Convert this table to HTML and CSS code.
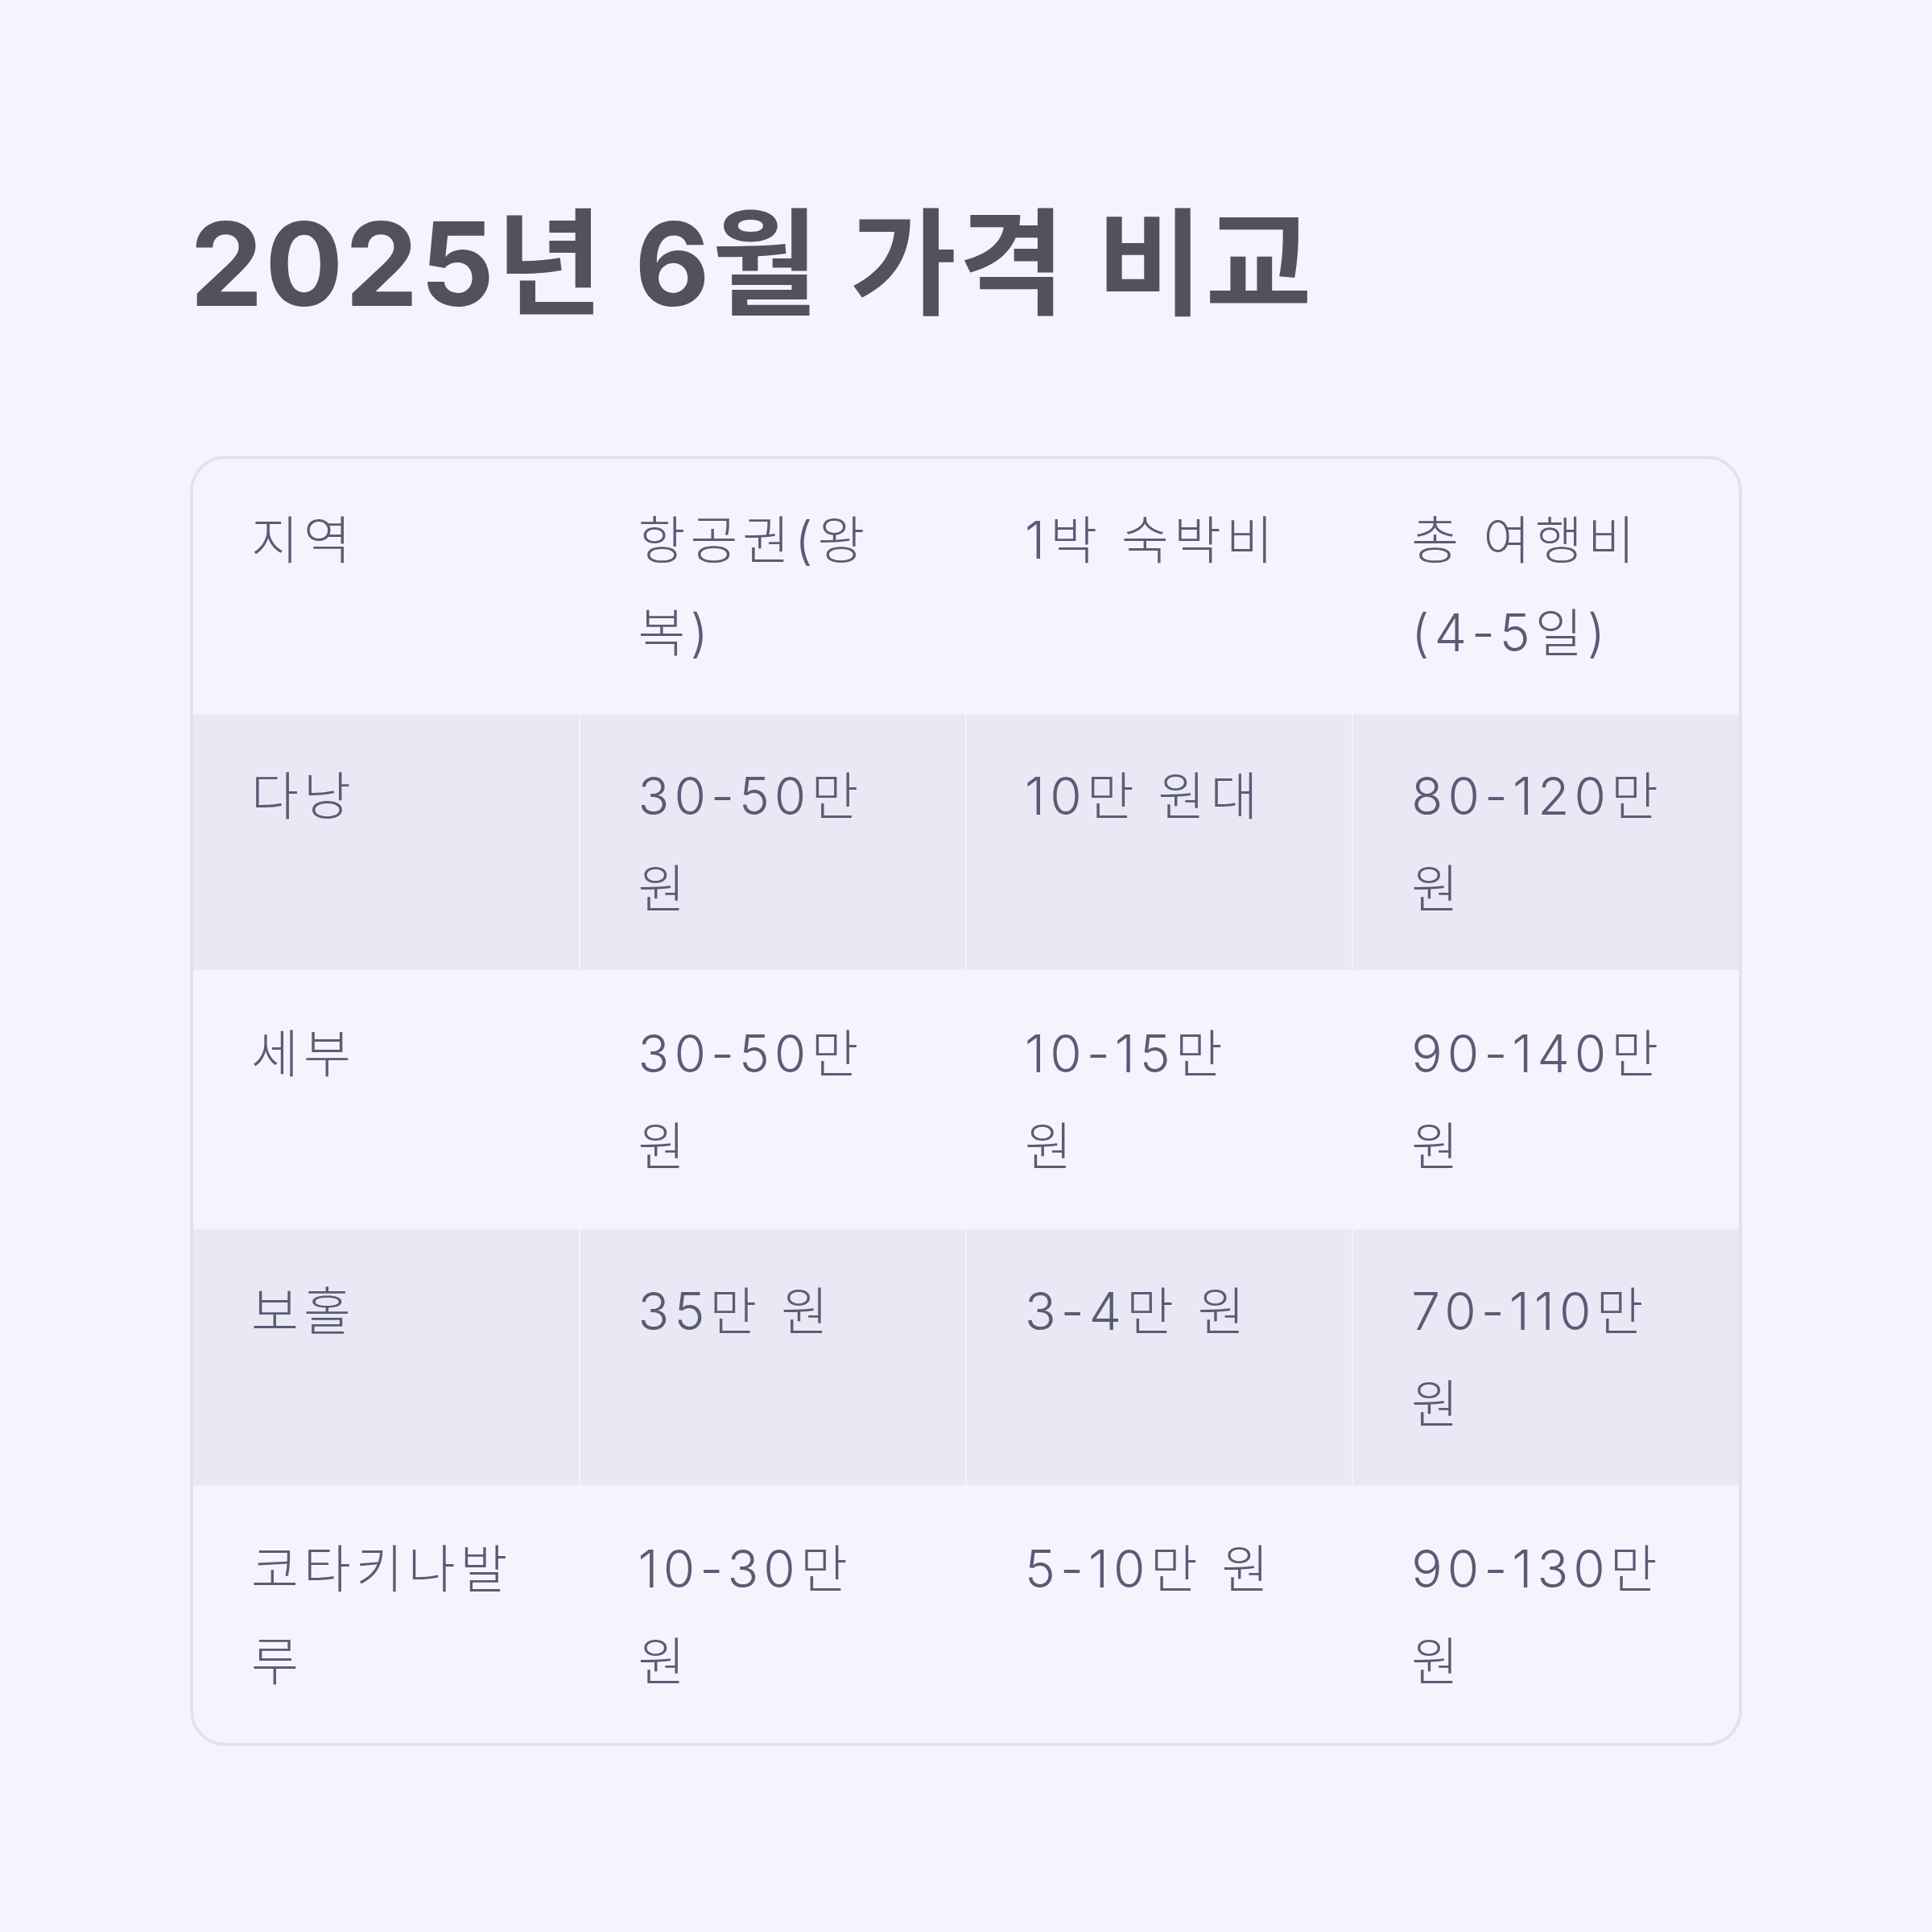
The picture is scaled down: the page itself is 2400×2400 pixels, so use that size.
FILE: index.html
```html
<!DOCTYPE html>
<html lang="ko">
<head>
<meta charset="utf-8">
<title>2025년 6월 가격 비교</title>
<link rel="stylesheet" href="styles.css">
</head>
<body>
<main class="page">
  <h1 class="title">2025년 6월 가격 비교</h1>
  <div class="card">
    <table class="compare">
      <thead>
        <tr>
          <th>지역</th>
          <th>항공권(왕복)</th>
          <th>1박 숙박비</th>
          <th>총 여행비 (4-5일)</th>
        </tr>
      </thead>
      <tbody>
        <tr class="shaded">
          <td>다낭</td>
          <td>30-50만 원</td>
          <td>10만 원대</td>
          <td>80-120만 원</td>
        </tr>
        <tr>
          <td>세부</td>
          <td>30-50만 원</td>
          <td>10-15만 원</td>
          <td>90-140만 원</td>
        </tr>
        <tr class="shaded">
          <td>보홀</td>
          <td>35만 원</td>
          <td>3-4만 원</td>
          <td>70-110만 원</td>
        </tr>
        <tr>
          <td>코타키나발루</td>
          <td>10-30만 원</td>
          <td>5-10만 원</td>
          <td>90-130만 원</td>
        </tr>
      </tbody>
    </table>
  </div>
</main>
</body>
</html>
```
FILE: styles.css
```css
html, body {
  margin: 0;
  padding: 0;
  background: #f4f4fe;
}

.page {
  padding: 236px;
  font-family: Inter, "Noto Sans CJK KR", sans-serif;
}

.title {
  margin: 8px 0 154px 0;
  font-size: 144px;
  line-height: 168px;
  font-weight: 700;
  color: #52525e;
  letter-spacing: 2.5px;
}

.card {
  width: 1920px;
  border: 4px solid #e2e2ee;
  border-radius: 44px;
  overflow: hidden;
  background: #f4f4fe;
}

.compare {
  width: 100%;
  border-collapse: collapse;
  table-layout: fixed;
}

.compare th,
.compare td {
  width: 25%;
  text-align: left;
  vertical-align: top;
  font-weight: 300;
  font-size: 64px;
  line-height: 115px;
  letter-spacing: 6px;
  color: #5c5b76;
  padding: 44px 73px 44px 72px;
  border: 2px solid #f4f4fe;
}

.compare th {
  padding: 43px 73px 42px 72px;
}

.compare tr:first-child th,
.compare tr:first-child td {
  border-top: none;
}

.compare tr > :first-child {
  border-left: none;
}

.compare tr > :last-child {
  border-right: none;
}

.compare tbody tr:last-child td {
  border-bottom: none;
}

.compare .shaded td {
  background: #e9e9f5;
}
```
